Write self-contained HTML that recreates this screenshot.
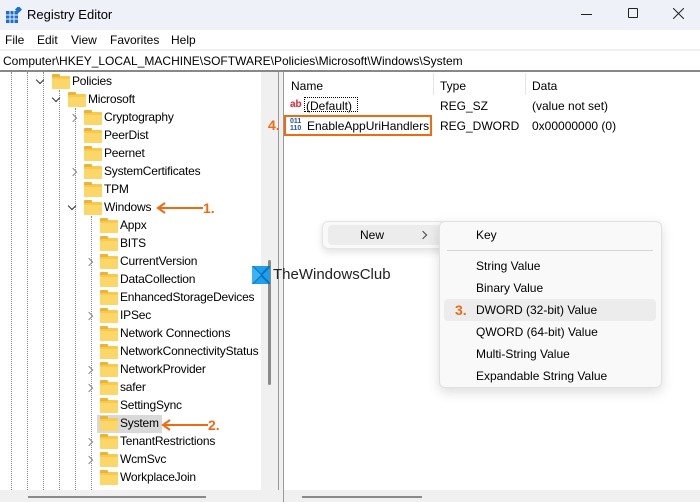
<!DOCTYPE html><html><head><style>
*{margin:0;padding:0;box-sizing:border-box}
body{width:700px;height:502px;position:relative;overflow:hidden;background:#fff;font-family:"Liberation Sans",sans-serif;font-size:12px;color:#000}
.a{position:absolute;white-space:nowrap}
.t{position:absolute;white-space:nowrap;letter-spacing:-0.2px}
.f{position:absolute;width:18px;height:13px;background:#f8c94a;border-radius:1px}
.f:before{content:"";position:absolute;left:0;top:-2px;width:8px;height:3px;background:#e9b437;border-radius:1px 1px 0 0}
.f:after{content:"";position:absolute;left:0;top:3px;width:18px;height:10px;background:#fbd668;border-radius:0 0 1px 1px}
.o{color:#f06a12;font-weight:bold;font-size:14px}
.vd{position:absolute;width:0;border-left:1px dotted #888}
.cr{position:absolute;width:6px;height:6px;border-right:1px solid #888;border-bottom:1px solid #888;transform:rotate(-45deg)}
.cd{position:absolute;width:6px;height:6px;border-right:1px solid #333;border-bottom:1px solid #333;transform:rotate(45deg)}
</style></head><body>
<div class="a" style="left:0;top:0;width:700px;height:30px;background:#eef1f8"></div>
<svg class="a" style="left:6px;top:7px" width="16" height="16" viewBox="0 0 16 16"><rect x="0" y="4" width="12" height="12" fill="#1c6fd1"/><path d="M4 4v12M8 4v12M0 8h12M0 12h12" stroke="#eef1f8" stroke-width="1"/><rect x="10" y="0" width="5" height="5" fill="#1c6fd1" transform="rotate(45 12.5 2.5)"/></svg>
<div class="a" style="left:27px;top:7px;font-size:13px">Registry Editor</div>
<div class="a" style="left:581px;top:14px;width:11px;border-top:1px solid #222"></div>
<div class="a" style="left:628px;top:8px;width:10px;height:10px;border:1px solid #222;border-radius:1px"></div>
<svg class="a" style="left:673px;top:8px" width="11" height="11"><path d="M0 0L11 11M11 0L0 11" stroke="#222" stroke-width="1"/></svg>
<div class="a" style="left:5px;top:33px">File</div><div class="a" style="left:37px;top:33px">Edit</div><div class="a" style="left:71px;top:33px">View</div><div class="a" style="left:110px;top:33px">Favorites</div><div class="a" style="left:171px;top:33px">Help</div>
<div class="a" style="left:0;top:49px;width:700px;height:2px;background:#f0f0f0"></div>
<div class="a" style="left:3px;top:54px">Computer\HKEY_LOCAL_MACHINE\SOFTWARE\Policies\Microsoft\Windows\System</div>
<div class="a" style="left:0;top:70px;width:700px;height:2px;background:#888"></div>
<div class="a" style="left:261px;top:72px;width:17px;height:418px;background:#f0f0f0"></div>
<div class="a" style="left:268px;top:260px;width:3px;height:125px;background:#8a8a8a;border-radius:2px"></div>
<div class="a" style="left:278px;top:72px;width:1px;height:430px;background:#999"></div>
<div class="a" style="left:279px;top:72px;width:4px;height:430px;background:#f0f0f0"></div>
<div class="a" style="left:283px;top:72px;width:1px;height:430px;background:#999"></div>
<div class="a" style="left:0;top:490px;width:279px;height:12px;background:#f0f0f0"></div>
<div class="a" style="left:28px;top:496px;width:178px;height:2px;background:#8a8a8a"></div>
<div class="a" style="left:284px;top:490px;width:416px;height:12px;background:#f0f0f0"></div>
<div class="a" style="left:302px;top:496px;width:120px;height:2px;background:#8a8a8a"></div>
<div class="vd" style="left:11px;top:72px;height:418px"></div>
<div class="vd" style="left:27px;top:72px;height:418px"></div>
<div class="vd" style="left:43px;top:72px;height:418px"></div>
<div class="vd" style="left:59px;top:90px;height:400px"></div>
<div class="vd" style="left:75px;top:108px;height:382px"></div>
<div class="vd" style="left:91px;top:216px;height:274px"></div>
<div class="cd" style="left:37px;top:77px"></div><div class="f" style="left:52px;top:76px"></div><div class="t" style="left:72px;top:74px">Policies</div>
<div class="cd" style="left:53px;top:95px"></div><div class="f" style="left:68px;top:94px"></div><div class="t" style="left:88px;top:92px">Microsoft</div>
<div class="cr" style="left:70px;top:115px"></div><div class="f" style="left:84px;top:112px"></div><div class="t" style="left:104px;top:110px">Cryptography</div>
<div class="f" style="left:84px;top:130px"></div><div class="t" style="left:104px;top:128px">PeerDist</div>
<div class="f" style="left:84px;top:148px"></div><div class="t" style="left:104px;top:146px">Peernet</div>
<div class="cr" style="left:70px;top:169px"></div><div class="f" style="left:84px;top:166px"></div><div class="t" style="left:104px;top:164px">SystemCertificates</div>
<div class="f" style="left:84px;top:184px"></div><div class="t" style="left:104px;top:182px">TPM</div>
<div class="cd" style="left:69px;top:203px"></div><div class="f" style="left:84px;top:202px"></div><div class="t" style="left:104px;top:200px">Windows</div>
<div class="f" style="left:100px;top:220px"></div><div class="t" style="left:120px;top:218px">Appx</div>
<div class="f" style="left:100px;top:238px"></div><div class="t" style="left:120px;top:236px">BITS</div>
<div class="cr" style="left:86px;top:259px"></div><div class="f" style="left:100px;top:256px"></div><div class="t" style="left:120px;top:254px">CurrentVersion</div>
<div class="f" style="left:100px;top:274px"></div><div class="t" style="left:120px;top:272px">DataCollection</div>
<div class="f" style="left:100px;top:292px"></div><div class="t" style="left:120px;top:290px">EnhancedStorageDevices</div>
<div class="cr" style="left:86px;top:313px"></div><div class="f" style="left:100px;top:310px"></div><div class="t" style="left:120px;top:308px">IPSec</div>
<div class="f" style="left:100px;top:328px"></div><div class="t" style="left:120px;top:326px">Network Connections</div>
<div class="f" style="left:100px;top:346px"></div><div class="t" style="left:120px;top:344px;width:141px;overflow:hidden">NetworkConnectivityStatus</div>
<div class="cr" style="left:86px;top:367px"></div><div class="f" style="left:100px;top:364px"></div><div class="t" style="left:120px;top:362px">NetworkProvider</div>
<div class="cr" style="left:86px;top:385px"></div><div class="f" style="left:100px;top:382px"></div><div class="t" style="left:120px;top:380px">safer</div>
<div class="f" style="left:100px;top:400px"></div><div class="t" style="left:120px;top:398px">SettingSync</div>
<div class="a" style="left:97px;top:415px;width:65px;height:18px;background:#d9d9d9"></div>
<div class="f" style="left:100px;top:418px"></div><div class="t" style="left:120px;top:416px">System</div>
<div class="cr" style="left:86px;top:439px"></div><div class="f" style="left:100px;top:436px"></div><div class="t" style="left:120px;top:434px">TenantRestrictions</div>
<div class="cr" style="left:86px;top:457px"></div><div class="f" style="left:100px;top:454px"></div><div class="t" style="left:120px;top:452px">WcmSvc</div>
<div class="f" style="left:100px;top:472px"></div><div class="t" style="left:120px;top:470px">WorkplaceJoin</div>
<svg class="a" style="left:155px;top:200px" width="50" height="16"><path d="M48 8H4M10 3L3 8L10 13" stroke="#f06a12" stroke-width="2" fill="none"/></svg>
<div class="a o" style="left:203px;top:200px">1.</div>
<svg class="a" style="left:160px;top:417px" width="50" height="16"><path d="M48 8H4M10 3L3 8L10 13" stroke="#f06a12" stroke-width="2" fill="none"/></svg>
<div class="a o" style="left:208px;top:417px">2.</div>
<div class="a" style="left:291px;top:79px">Name</div>
<div class="a" style="left:433px;top:73px;width:1px;height:22px;background:#e5e5e5"></div>
<div class="a" style="left:440px;top:79px">Type</div>
<div class="a" style="left:525px;top:73px;width:1px;height:22px;background:#e5e5e5"></div>
<div class="a" style="left:532px;top:79px">Data</div>
<div class="a" style="left:290px;top:99px;font-size:10px;font-weight:bold;color:#d23;">ab</div>
<div class="a" style="left:304px;top:97px;width:54px;height:15px;border:1px dotted #000"></div>
<div class="a" style="left:306px;top:99px">(Default)</div>
<div class="a" style="left:440px;top:99px">REG_SZ</div>
<div class="a" style="left:532px;top:99px">(value not set)</div>
<div class="a o" style="left:268px;top:117px">4.</div>
<div class="a" style="left:284px;top:115px;width:148px;height:21px;border:2px solid #f06a12"></div>
<div class="a" style="left:290px;top:118px;font-size:7px;line-height:7px;font-weight:bold;color:#1c4fb3">011<br>110</div>
<div class="a" style="left:307px;top:119px">EnableAppUriHandlers</div>
<div class="a" style="left:440px;top:119px">REG_DWORD</div>
<div class="a" style="left:532px;top:119px">0x00000000 (0)</div>
<svg class="a" style="left:252px;top:266px" width="18" height="18"><rect width="18" height="18" fill="#1ea0e8"/><path d="M0 0L18 18M18 0L0 18" stroke="#0b6fc4" stroke-width="2"/><path d="M0 0L9 9L0 18z" fill="#3cb2f0"/></svg>
<div class="a" style="left:273px;top:266px;font-size:15px;color:#222">TheWindowsClub</div>
<div class="a" style="left:322px;top:221px;width:125px;height:28px;background:#f9f9f9;border:1px solid #e5e5e5;border-radius:6px;box-shadow:0 3px 8px rgba(0,0,0,.12)"></div>
<div class="a" style="left:328px;top:225px;width:114px;height:20px;background:#ececec;border-radius:4px"></div>
<div class="a" style="left:360px;top:228px">New</div>
<div class="cr" style="left:420px;top:232px;border-color:#444"></div>
<div class="a" style="left:439px;top:221px;width:223px;height:167px;background:#f9f9f9;border:1px solid #e0e0e0;border-radius:6px;box-shadow:0 4px 12px rgba(0,0,0,.14)"></div>
<div class="a" style="left:476px;top:228px">Key</div>
<div class="a" style="left:447px;top:250px;width:206px;height:1px;background:#d6d6d6"></div>
<div class="a" style="left:476px;top:259px">String Value</div>
<div class="a" style="left:476px;top:281px">Binary Value</div>
<div class="a" style="left:444px;top:299px;width:212px;height:22px;background:#ececec;border-radius:4px"></div>
<div class="a o" style="left:455px;top:302px">3.</div>
<div class="a" style="left:476px;top:303px">DWORD (32-bit) Value</div>
<div class="a" style="left:476px;top:325px">QWORD (64-bit) Value</div>
<div class="a" style="left:476px;top:347px">Multi-String Value</div>
<div class="a" style="left:476px;top:369px">Expandable String Value</div>
</body></html>
